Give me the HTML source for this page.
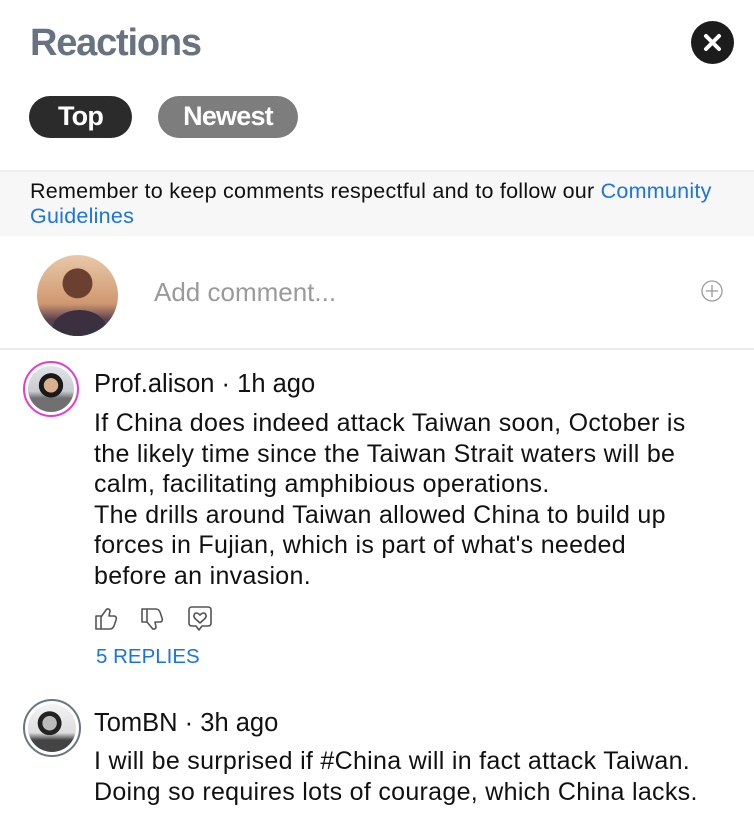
<!DOCTYPE html>
<html><head><meta charset="utf-8"><style>
*{margin:0;padding:0;box-sizing:border-box}
body{width:754px;height:837px;background:#fff;font-family:"Liberation Sans",sans-serif;position:relative;overflow:hidden;color:#111}
.abs{position:absolute}
h1{position:absolute;left:30px;top:22px;font-size:38px;font-weight:bold;color:#677380;letter-spacing:-1.2px}
.close{left:691px;top:21px;width:43px;height:43px;border-radius:50%;background:#1c1c1c}
.pill{top:96px;height:42px;border-radius:21px;color:#fff;font-weight:bold;font-size:27px;text-align:center;line-height:40px;letter-spacing:-0.8px}
.band{left:0;top:170px;width:754px;height:66px;background:#f7f7f7;border-top:2px solid #eee}
.band p{position:absolute;left:30px;top:7px;font-size:21.5px;line-height:25px;letter-spacing:0.25px;width:700px}
.blue{color:#1a73e8}
.line{left:0;top:348px;width:754px;height:2px;background:#ececec}
.txt{font-size:25px;line-height:30.5px;letter-spacing:0.3px;white-space:nowrap}
.name{font-size:25.5px;letter-spacing:0}
</style></head><body>
<h1>Reactions</h1>
<div class="abs close"><svg width="43" height="43"><path d="M15 15L28 28M28 15L15 28" stroke="#fff" stroke-width="4" stroke-linecap="round"/></svg></div>
<div class="abs pill" style="left:29px;width:103px;background:#2b2b2b">Top</div>
<div class="abs pill" style="left:158px;width:140px;background:#7d7d7d">Newest</div>
<div class="abs band"><p>Remember to keep comments respectful and to follow our <span class="blue">Community Guidelines</span></p></div>
<div class="abs" style="left:37px;top:255px;width:81px;height:81px;border-radius:50%;background:radial-gradient(circle at 50% 35%,#6b4030 0 22%,transparent 23%),linear-gradient(#e8c8a8,#d09870 60%,#5a4050 80%);overflow:hidden"><div class="abs" style="left:15px;top:55px;width:55px;height:40px;border-radius:50% 50% 0 0;background:#3a3040"></div></div>
<div class="abs" style="left:154px;top:277px;font-size:26px;color:#9a9a9a;letter-spacing:0">Add comment...</div>
<div class="abs" style="left:701px;top:280px"><svg width="22" height="22"><circle cx="11" cy="11" r="10" fill="none" stroke="#999" stroke-width="1.3"/><path d="M11 5V17M5 11H17" stroke="#999" stroke-width="1.3"/></svg></div>
<div class="abs line"></div>
<div class="abs" style="left:23px;top:361px;width:56px;height:56px;border-radius:50%;border:2.5px solid #e83ad0;background:#fff;padding:3px"><div style="width:100%;height:100%;border-radius:50%;background:radial-gradient(circle at 50% 42%,#d8b090 0 20%,#1a1a1a 21% 34%,transparent 35%),linear-gradient(#e0e4e8,#c8ccd0 55%,#707070 70%)"></div></div>
<div class="abs name" style="left:94px;top:370px">Prof.alison · 1h ago</div>
<div class="abs txt" style="left:94px;top:408px">If China does indeed attack Taiwan soon, October is<br>the likely time since the Taiwan Strait waters will be<br>calm, facilitating amphibious operations.<br>The drills around Taiwan allowed China to build up<br>forces in Fujian, which is part of what's needed<br>before an invasion.</div>
<svg class="abs" style="left:94px;top:604px" width="130" height="30" fill="none" stroke="#555" stroke-width="1.6" stroke-linejoin="round" stroke-linecap="round">
<path d="M2 12h5v13H2z M7 13l5-7c1-2 4-1 4 1l-1 5h5c2 0 3 2 2 4l-2 6c-1 2-2 3-4 3H7"/>
<path d="M48 5h5v13h-5z M53 5h9c2 0 3 1 4 3l2 6c1 2 0 4-2 4h-5l1 5c0 2-3 3-4 1l-5-6"/>
<path d="M98 3h16c2 0 3 1 3 3v13c0 2-1 3-3 3h-6l-3 4-3-4h-4c-2 0-3-1-3-3V6c0-2 1-3 3-3z M106 19l-5-4.5c-2-2-1-5.5 1.5-5.5 1.5 0 2.5 1 3.5 2 1-1 2-2 3.5-2 2.5 0 3.5 3.5 1.5 5.5z"/>
</svg>
<div class="abs" style="left:96px;top:645px;font-size:20.5px;color:#1a73e8;letter-spacing:0">5 REPLIES</div>
<div class="abs" style="left:23px;top:699px;width:58px;height:58px;border-radius:50%;border:2.5px solid #6a7580;background:#fff;padding:3px"><div style="width:100%;height:100%;border-radius:50%;background:radial-gradient(circle at 45% 40%,#bbb 0 18%,#222 19% 30%,transparent 31%),linear-gradient(#f4f4f4,#ddd 60%,#444 75%)"></div></div>
<div class="abs name" style="left:94px;top:709px">TomBN · 3h ago</div>
<div class="abs txt" style="left:94px;top:746px">I will be surprised if #China will in fact attack Taiwan.<br>Doing so requires lots of courage, which China lacks.</div>
</body></html>
